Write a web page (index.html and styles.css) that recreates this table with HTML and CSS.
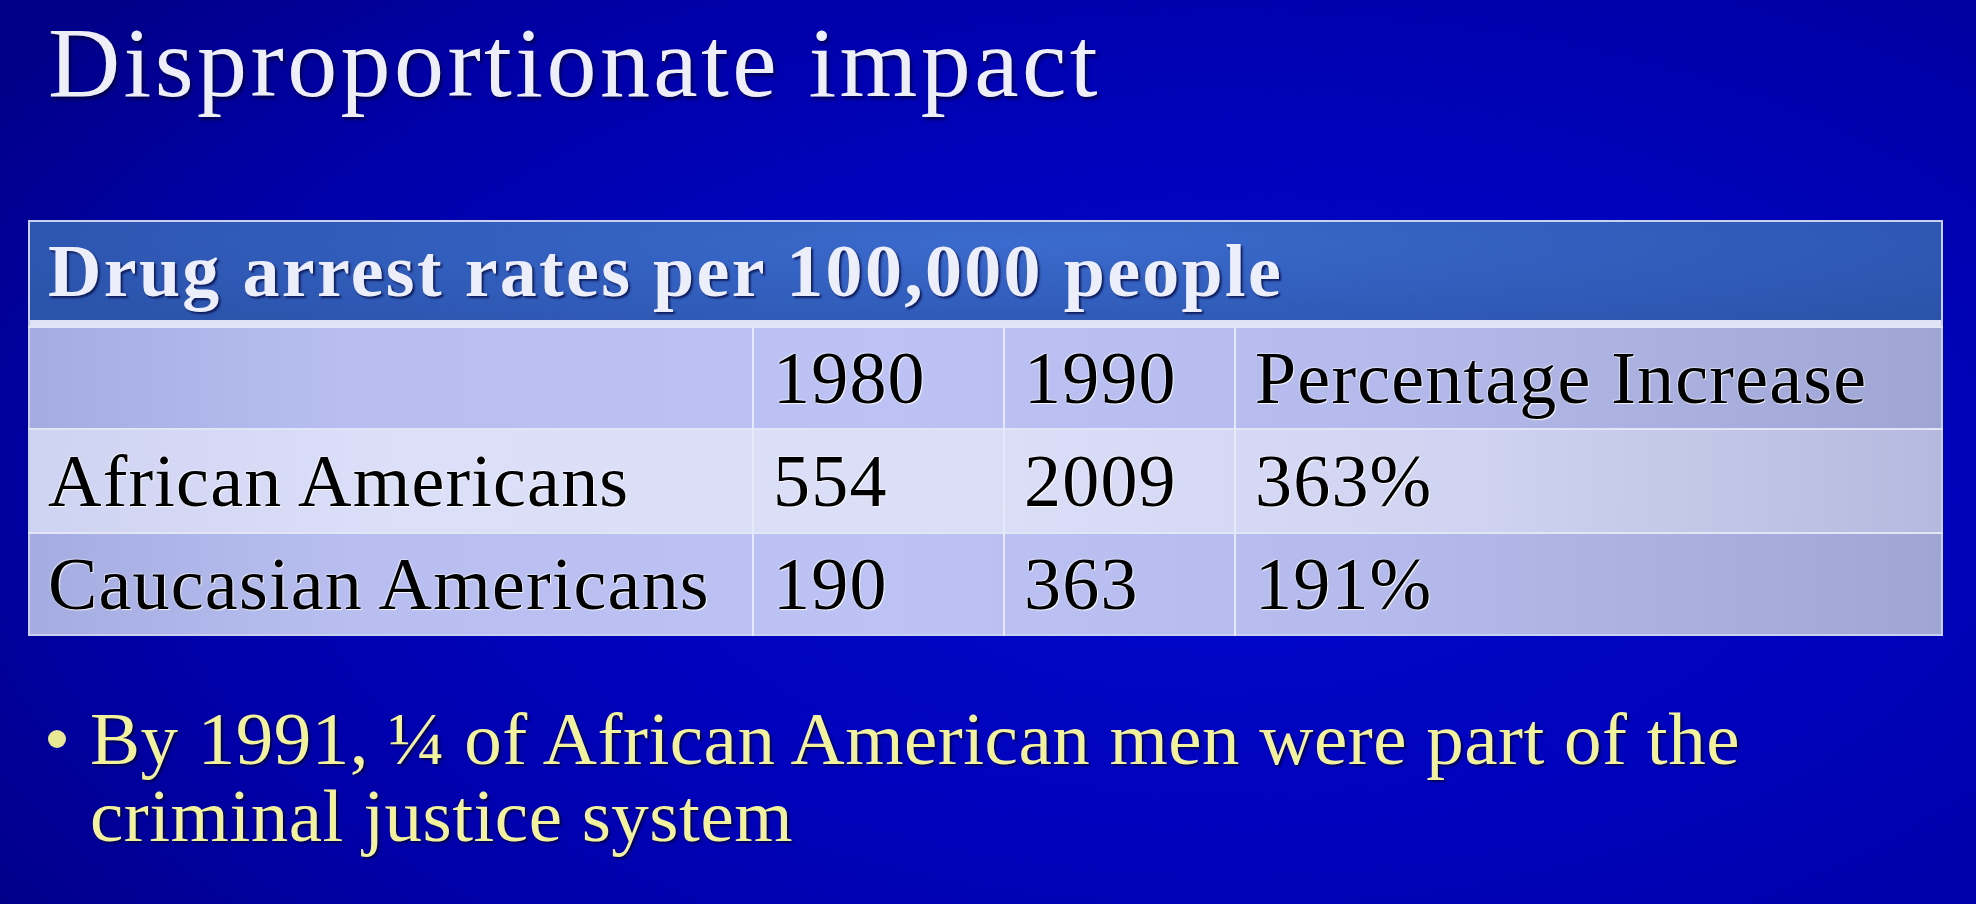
FILE: index.html
```html
<!DOCTYPE html>
<html>
<head>
<meta charset="utf-8">
<link rel="stylesheet" href="styles.css">
</head>
<body>
<div class="slide">
  <h1 class="title">Disproportionate impact</h1>
  <table class="data">
    <tr class="head"><th colspan="4">Drug arrest rates per 100,000 people</th></tr>
    <tr class="band"><td colspan="4"></td></tr>
    <tr class="row odd"><td class="c1"></td><td class="c2">1980</td><td class="c3">1990</td><td class="c4">Percentage Increase</td></tr>
    <tr class="row even"><td class="c1">African Americans</td><td class="c2">554</td><td class="c3">2009</td><td class="c4">363%</td></tr>
    <tr class="row odd"><td class="c1">Caucasian Americans</td><td class="c2">190</td><td class="c3">363</td><td class="c4">191%</td></tr>
  </table>
  <ul class="bullets">
    <li>By 1991, ¼ of African American men were part of the criminal justice system</li>
  </ul>
</div>
</body>
</html>
```
FILE: styles.css
```css
html, body {
  margin: 0;
  padding: 0;
}
body {
  width: 1976px;
  height: 904px;
  overflow: hidden;
  font-family: "Liberation Serif", "Times New Roman", serif;
}
.slide {
  width: 1976px;
  height: 904px;
  box-sizing: border-box;
  padding: 0 33px 0 28px;
  background: radial-gradient(ellipse 75% 85% at 62% 55%, #0008cc 0%, #0003bc 45%, #0000a6 75%, #000088 100%);
  display: flex;
  flex-direction: column;
}
.title {
  margin: 0;
  padding: 8px 0 0 20px;
  height: 206px;
  box-sizing: border-box;
  font-weight: normal;
  font-size: 100px;
  line-height: 110px;
  letter-spacing: 3.4px;
  color: #eeeef6;
  text-shadow: 2px 3px 3px rgba(0, 0, 40, 0.6);
}
.data {
  border-collapse: collapse;
  width: 1915px;
  margin-top: 14px;
  border: 2px solid #c8cff0;
}
.head th {
  height: 98px;
  padding: 0 0 0 18px;
  text-align: left;
  font-weight: bold;
  font-size: 74px;
  letter-spacing: 2.3px;
  color: #eceef9;
  text-shadow: 2px 2px 2px rgba(10, 20, 80, 0.85);
  background: radial-gradient(ellipse 60% 120% at 52% 20%, #3b6bce 0%, #3360bf 45%, #2b53ab 100%);
  vertical-align: middle;
}
.band td {
  height: 6px;
  padding: 0;
  background: #dfe3f6;
}
.row td {
  font-size: 74px;
  letter-spacing: 1.2px;
  color: #000;
  text-shadow: 1px 1px 1px rgba(255, 255, 255, 0.9), -1px -1px 1px rgba(255, 255, 255, 0.5);
  padding: 0 0 0 19px;
  border-left: 2px solid #e6e9f8;
  border-top: 2px solid #e2e5f6;
  vertical-align: middle;
  white-space: nowrap;
}
.row td.c1 { border-left: none; padding-left: 18px; }
.row.odd td {
  height: 100px;
  background: linear-gradient(90deg, #a3aadf 0%, #b8bff0 18%, #bcc3f4 45%, #b4bbec 70%, #9ea4d2 100%);
  background-attachment: fixed;
}
.row.even td {
  height: 102px;
  background: linear-gradient(90deg, #cdd2f1 0%, #dcdff8 20%, #dadef7 50%, #cfd3f1 75%, #b3b7dc 100%);
  background-attachment: fixed;
}
.row td.c1 { width: 704px; }
.row td.c2 { width: 230px; }
.row td.c3 { width: 210px; }
.bullets {
  list-style: none;
  margin: 64px 0 0 0;
  padding: 0 0 0 62px;
  width: 1700px;
  font-size: 75px;
  line-height: 77px;
  letter-spacing: 0.5px;
  color: #f2f29c;
  text-shadow: 2px 2px 2px rgba(0, 0, 50, 0.7);
}
.bullets li {
  position: relative;
}
.bullets li::before {
  content: "";
  position: absolute;
  left: -42px;
  top: 30px;
  width: 18px;
  height: 18px;
  border-radius: 50%;
  background: #e8e894;
}
```
